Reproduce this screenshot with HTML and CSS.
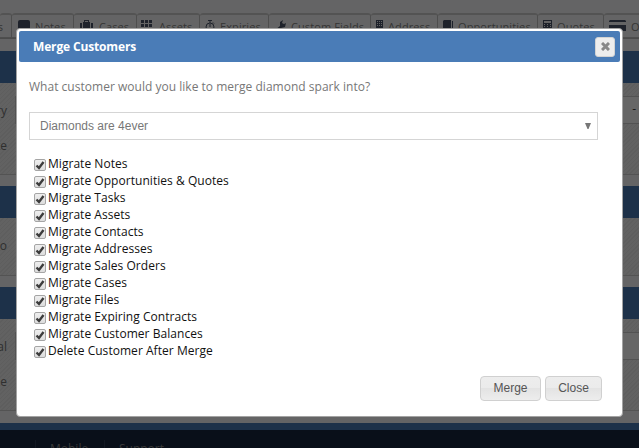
FILE: index.html
```html
<!DOCTYPE html>
<html lang="en">
<head>
    <meta charset="UTF-8">
    <title>Merge Customers</title>
    <link rel="stylesheet" href="styles.css">
</head>
<body>
    <div class="page">
        <div class="tabs">
            <div class="tab">Tasks</div>
            <div class="tab"><svg width="12" height="12" viewBox="0 0 12 12"><rect width="12" height="10" rx="2"/><path d="M3 9v3l4-3z"/></svg>Notes</div>
            <div class="tab"><svg width="14" height="12" viewBox="0 0 14 12"><path d="M0 3h2v8H1L0 10zM3 2h1V0h5v2h1v9H3zM5 1v1h3V1zM11 3h2v7l-1 1h-1z"/></svg>Cases</div>
            <div class="tab"><svg width="12" height="12" viewBox="0 0 12 12"><path d="M0 0h3v3H0zM4 0h3v3H4zM8 0h3v3H8zM0 4h3v3H0zM4 4h3v3H4zM8 4h3v3H8zM0 8h3v3H0zM4 8h3v3H4zM8 8h3v3H8z"/></svg>Assets</div>
            <div class="tab"><svg width="10" height="12" viewBox="0 0 10 12"><path d="M3 .5h4M5 1v2M8 2.500l1 1M5 4v3" class="line"/><circle cx="5" cy="7" r="4" class="line"/></svg>Expiries</div>
            <div class="tab"><svg width="11" height="12" viewBox="0 0 11 12"><path d="M8 0L5 2v4L0 10v2h2l4-4 4-1 1-4-2 1-2-1z"/></svg>Custom Fields</div>
            <div class="tab"><svg width="7" height="12" viewBox="0 0 7 12"><path fill-rule="evenodd" d="M0 0h7v12H0zM1 1v1h1V1zM3 1v1h1V1zM5 1v1h1V1zM1 3v1h1V3zM3 3v1h1V3zM5 3v1h1V3zM1 5v1h1V5zM3 5v1h1V5zM5 5v1h1V5z"/></svg>Address</div>
            <div class="tab"><svg width="10" height="12" viewBox="0 0 10 12"><path d="M0 1l1-1h7v8H1v2h8V1h1v10H0z"/></svg>Opportunities</div>
            <div class="tab"><svg width="9" height="12" viewBox="0 0 9 12"><path fill-rule="evenodd" d="M0 0h9v12H0zM1 1v2h7V1zM1 4v1h1V4zM4 4v1h1V4zM7 4v1h1V4zM1 6v1h1V6zM4 6v1h1V6zM7 6v1h1V6z"/></svg>Quotes</div>
            <div class="tab"><svg width="17" height="12" viewBox="0 0 17 12"><path d="M0 1l1-1h15l1 1v1H0zM0 5h17v6H0z"/></svg>Orders</div>
        </div>

        <div class="panel">
            <div class="panel-head"></div>
            <div class="panel-body">
                <div class="row"><span class="label">ry</span><span class="field">-</span></div>
                <div class="row"><span class="label">te</span></div>
            </div>
        </div>
        <div class="panel">
            <div class="panel-head"></div>
            <div class="panel-body single">
                <div class="row"><span class="label">o</span></div>
            </div>
        </div>
        <div class="panel">
            <div class="panel-head"></div>
            <div class="panel-body">
                <div class="row"><span class="label">al</span><span class="field"></span></div>
                <div class="row"><span class="label">e</span></div>
            </div>
        </div>

        <div class="footer">
            <div class="footer-link">Mobile</div>
            <div class="footer-link">Support</div>
        </div>
    </div>

    <div class="overlay"></div>

    <div class="dialog">
        <div class="dialog-title">
            <span>Merge Customers</span>
            <button class="close-icon"><svg width="9" height="9" viewBox="0 0 9 9"><path d="M1 1l7 7M8 1L1 8"/></svg></button>
        </div>
        <div class="dialog-content">
            <p class="question">What customer would you like to merge diamond spark into?</p>
            <div class="select"><span>Diamonds are 4ever</span><svg width="6" height="6" viewBox="0 0 6 6"><path d="M0 0h6L3.500 6h-1z"/></svg></div>
            <div class="options">
                <label><input type="checkbox" checked><svg class="tick" viewBox="0 0 12 12"><path d="M2.500 6.500l2.500 2.500 4.500-6"/></svg>Migrate Notes</label>
                <label><input type="checkbox" checked><svg class="tick" viewBox="0 0 12 12"><path d="M2.500 6.500l2.500 2.500 4.500-6"/></svg>Migrate Opportunities &amp; Quotes</label>
                <label><input type="checkbox" checked><svg class="tick" viewBox="0 0 12 12"><path d="M2.500 6.500l2.500 2.500 4.500-6"/></svg>Migrate Tasks</label>
                <label><input type="checkbox" checked><svg class="tick" viewBox="0 0 12 12"><path d="M2.500 6.500l2.500 2.500 4.500-6"/></svg>Migrate Assets</label>
                <label><input type="checkbox" checked><svg class="tick" viewBox="0 0 12 12"><path d="M2.500 6.500l2.500 2.500 4.500-6"/></svg>Migrate Contacts</label>
                <label><input type="checkbox" checked><svg class="tick" viewBox="0 0 12 12"><path d="M2.500 6.500l2.500 2.500 4.500-6"/></svg>Migrate Addresses</label>
                <label><input type="checkbox" checked><svg class="tick" viewBox="0 0 12 12"><path d="M2.500 6.500l2.500 2.500 4.500-6"/></svg>Migrate Sales Orders</label>
                <label><input type="checkbox" checked><svg class="tick" viewBox="0 0 12 12"><path d="M2.500 6.500l2.500 2.500 4.500-6"/></svg>Migrate Cases</label>
                <label><input type="checkbox" checked><svg class="tick" viewBox="0 0 12 12"><path d="M2.500 6.500l2.500 2.500 4.500-6"/></svg>Migrate Files</label>
                <label><input type="checkbox" checked><svg class="tick" viewBox="0 0 12 12"><path d="M2.500 6.500l2.500 2.500 4.500-6"/></svg>Migrate Expiring Contracts</label>
                <label><input type="checkbox" checked><svg class="tick" viewBox="0 0 12 12"><path d="M2.500 6.500l2.500 2.500 4.500-6"/></svg>Migrate Customer Balances</label>
                <label><input type="checkbox" checked><svg class="tick" viewBox="0 0 12 12"><path d="M2.500 6.500l2.500 2.500 4.500-6"/></svg>Delete Customer After Merge</label>
            </div>
        </div>
        <div class="dialog-buttons">
            <button class="btn">Merge</button>
            <button class="btn">Close</button>
        </div>
    </div>
</body>
</html>
```

FILE: styles.css
```css
* {
    box-sizing: border-box;
}
body {
    margin: 0;
    height: 448px;
    overflow: hidden;
    font-family: "Open Sans", sans-serif;
    font-size: 12px;
    background-color: #fff;
}

/* page behind the dialog */
.page {
    height: 448px;
    padding-top: 13px;
    overflow: hidden;
    background-color: #fbfbfc;
}
.tabs {
    display: flex;
    height: 26px;
    margin-bottom: 12px;
    border-bottom: 1px solid #bbb;
    white-space: nowrap;
}
.tab {
    flex: none;
    display: flex;
    align-items: center;
    width: 63px;
    padding: 0 0 0 6px;
    border: 1px solid #c4c4c4;
    border-top: 2px solid #d0d0d0;
    border-left: none;
    border-radius: 3px 3px 0 0;
    font-size: 11px;
    color: #858585;
    letter-spacing: 0.1px;
}
.tab svg {
    flex: none;
    margin-right: 5px;
    fill: #4c566b;
}
.tab .line {
    fill: none;
    stroke: #4c566b;
}
.tab:nth-child(1) {
    width: 12px;
    padding: 0;
    justify-content: flex-end;
    padding-right: 8px;
}
.tab:nth-child(2) { width: 62px; }
.tab:nth-child(4) { padding-left: 4px; }
.tab:nth-child(4) svg { margin-right: 6px; }
.tab:nth-child(5) { width: 69px; padding-left: 5px; }
.tab:nth-child(6) { width: 102px; }
.tab:nth-child(7) { width: 67px; padding-left: 5px; }
.tab:nth-child(8) { width: 100px; padding-left: 5px; }
.tab:nth-child(9) { width: 66px; padding-left: 5px; }
.tab:nth-child(10) { width: 70px; padding-left: 5px; }

.panel {
    margin-bottom: 11px;
    background-color: #f8f8f8;
}
.panel-head {
    height: 32px;
    background-color: #4a7cb7;
}
.panel-body {
    padding: 10px 0 11px;
    border-bottom: 1px solid #d0d0d0;
    background: repeating-linear-gradient(135deg, #f4f4f4 0, #f4f4f4 2px, #ececec 2px, #ececec 3px);
}
.panel-body.single {
    padding-bottom: 12px;
}
.row {
    display: flex;
    align-items: center;
    height: 35px;
}
.label {
    width: 15px;
    padding-right: 8px;
    display: flex;
    justify-content: flex-end;
    color: #777;
}
.field {
    flex: 1;
    height: 28px;
    margin-bottom: 2px;
    padding-right: 3px;
    border: 1px solid #ccc;
    border-right: none;
    background-color: #fff;
    line-height: 24px;
    text-align: right;
    color: #444;
}
.footer {
    display: flex;
    height: 40px;
    margin-top: 12px;
    padding: 10px 0 0 35px;
    border-top: 7px solid #4a7cb7;
    background-color: #172640;
}
.footer-link {
    width: 69px;
    padding-left: 14px;
    border-left: 1px solid #2d3c55;
    color: #8b8b8b;
}
.overlay {
    position: absolute;
    inset: 0;
    background-color: rgba(0, 0, 0, 0.6);
}

/* dialog */
.dialog {
    position: absolute;
    left: 16px;
    top: 28px;
    width: 607px;
    height: 389px;
    padding: 2px;
    display: flex;
    flex-direction: column;
    border: 1px solid #a3a3a3;
    border-radius: 4px;
    background-color: #fff;
}
.dialog-title {
    display: flex;
    align-items: center;
    justify-content: space-between;
    height: 31px;
    padding: 0 5px 0 14px;
    border-radius: 2px;
    background-color: #4a7cb7;
    color: #fff;
    font-weight: bold;
    letter-spacing: -0.15px;
}
.close-icon {
    display: flex;
    align-items: center;
    justify-content: center;
    width: 20px;
    height: 20px;
    padding: 0;
    border: 1px solid #d3d3d3;
    border-radius: 3px;
    background-color: #ededed;
}
.close-icon path {
    stroke: #888;
    stroke-width: 3;
}
.dialog-content {
    flex: 1;
    padding: 16px 22px 0 10px;
}
.question {
    margin: 0;
    line-height: 18px;
    color: #777;
    letter-spacing: 0.02px;
}
.select {
    display: flex;
    align-items: center;
    justify-content: space-between;
    height: 28px;
    margin-top: 16px;
    padding: 0 6px 0 10px;
    border: 1px solid #d5d5d5;
    font-family: "Liberation Sans", Arial, sans-serif;
    color: #777;
}
.select svg {
    fill: #777;
}
.options {
    padding: 15px 0 0 5px;
}
.options label {
    display: flex;
    align-items: center;
    position: relative;
    height: 17px;
    color: #111;
    letter-spacing: 0.04px;
}
.options input {
    appearance: none;
    flex: none;
    width: 12px;
    height: 12px;
    margin: 3px 2px 0 0;
    border: 1px solid #a5a5a5;
    border-radius: 2px;
    background: linear-gradient(#eee, #ddd);
}
.tick {
    position: absolute;
    left: 0;
    top: 4px;
    width: 12px;
    height: 12px;
    fill: none;
    stroke: #3c3c3c;
    stroke-width: 2.4;
}
.dialog-buttons {
    display: flex;
    justify-content: flex-end;
    gap: 4px;
    padding: 0 18px 13px 0;
}
.btn {
    width: 61px;
    height: 25px;
    padding: 0 0 2px;
    border: 1px solid #d0d0d0;
    border-radius: 4px;
    background: linear-gradient(#ededed 0, #ebebeb 50%, #e3e3e3 50%, #ededed 100%);
    font-family: "Liberation Sans", Arial, sans-serif;
    font-size: 12px;
    color: #555;
}
.btn:last-child {
    width: 57px;
}
```
